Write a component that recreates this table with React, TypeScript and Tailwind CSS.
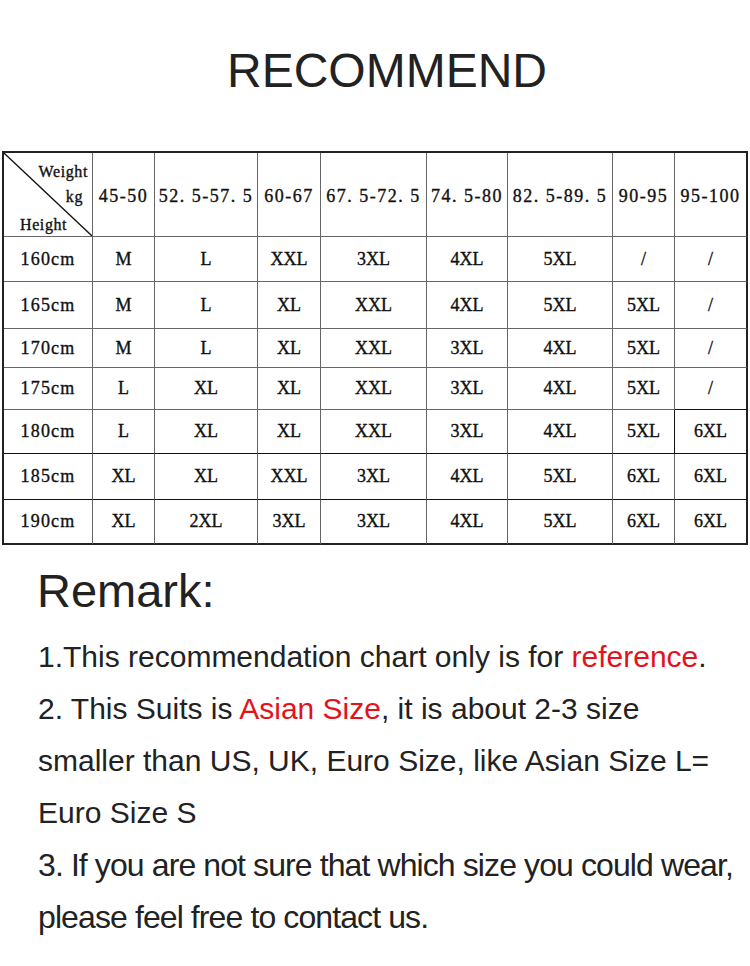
import React from "react";

const headers = ["45-50", "52. 5-57. 5", "60-67", "67. 5-72. 5", "74. 5-80", "82. 5-89. 5", "90-95", "95-100"];

const rows: string[][] = [
  ["160cm", "M", "L", "XXL", "3XL", "4XL", "5XL", "/", "/"],
  ["165cm", "M", "L", "XL", "XXL", "4XL", "5XL", "5XL", "/"],
  ["170cm", "M", "L", "XL", "XXL", "3XL", "4XL", "5XL", "/"],
  ["175cm", "L", "XL", "XL", "XXL", "3XL", "4XL", "5XL", "/"],
  ["180cm", "L", "XL", "XL", "XXL", "3XL", "4XL", "5XL", "6XL"],
  ["185cm", "XL", "XL", "XXL", "3XL", "4XL", "5XL", "6XL", "6XL"],
  ["190cm", "XL", "2XL", "3XL", "3XL", "4XL", "5XL", "6XL", "6XL"],
];

function cellClass(r: number, c: number): string {
  const base = c === 0 ? "flex items-center justify-center whitespace-nowrap tracking-[1.2px]" : "flex items-center justify-center whitespace-nowrap";
  const right = c === 8 ? "border-r-2 border-r-[#222]" : c === 7 && r === 4 ? "border-r border-r-[#111]" : "border-r border-r-[#666]";
  const bottom =
    r === 6
      ? "border-b-2 border-b-[#222]"
      : r === 4 || r === 5
      ? "border-b border-b-[#111]"
      : r === 3 && c === 8
      ? "border-b border-b-[#111]"
      : "border-b border-b-[#666]";
  return `${base} ${right} ${bottom}`;
}

export default function App() {
  return (
    <div className="w-[750px] h-[966px] bg-white text-[#222] overflow-hidden" style={{ fontFamily: "'Liberation Sans', Arial, sans-serif" }}>
      <h1 className="pt-[47px] text-center text-[48px] leading-[48px] font-normal pl-[24px]">RECOMMEND</h1>

      <div className="mt-[56px] ml-[2px] w-[746px]">
        <div
          className="grid grid-cols-[89px_62px_103px_63px_106px_81px_105px_62px_73px] grid-rows-[84px_45px_47px_39px_42px_44px_46px_45px] border-l-2 border-t-2 border-[#222] text-[#111] text-[18px] [-webkit-text-stroke:0.35px_#111]"
          style={{ fontFamily: "'Liberation Serif', 'Times New Roman', serif" }}
        >
          <div className="relative border-r border-b border-[#666] text-[16px] tracking-[0.6px]">
            <svg className="absolute inset-0 w-full h-full" viewBox="0 0 88 83" preserveAspectRatio="none">
              <line x1="0" y1="0" x2="88" y2="83" stroke="#111" strokeWidth="1.3" />
            </svg>
            <div className="flex flex-col pt-[10px]">
              <div className="h-[18px] leading-[18px] text-right pr-[4px]">Weight</div>
              <div className="h-[18px] leading-[18px] mt-[7px] text-right pr-[9px]">kg</div>
              <div className="h-[18px] leading-[18px] mt-[10px] text-left pl-[16px]">Height</div>
            </div>
          </div>
          {headers.map((h, i) => (
            <div
              key={h}
              className={
                i === 7
                  ? "flex items-center justify-center pt-[4px] whitespace-nowrap tracking-[1.5px] border-r-2 border-b border-r-[#222] border-b-[#666]"
                  : "flex items-center justify-center pt-[4px] whitespace-nowrap tracking-[1.5px] border-r border-b border-[#666]"
              }
            >
              {h}
            </div>
          ))}
          {rows.map((row, r) =>
            row.map((v, c) => (
              <div key={`${r}-${c}`} className={cellClass(r, c)}>
                {v}
              </div>
            ))
          )}
        </div>
      </div>

      <div className="pl-[37px] mt-[22px]">
        <div className="text-[47px] leading-[47px]">Remark:</div>
        <div className="mt-[17px] pl-[1px] text-[30px] leading-[52px] whitespace-nowrap">
          <div>
            1.This recommendation chart only is for <span className="text-[#e3131b]">reference</span>.
          </div>
          <div>
            2. This Suits is <span className="text-[#e3131b]">Asian Size</span>, it is about 2-3 size
            <br />
            smaller than US, UK, Euro Size, like Asian Size L=
            <br />
            Euro Size S
          </div>
          <div className="text-[32px] tracking-[-0.9px]">
            3. If you are not sure that which size you could wear,
            <br />
            please feel free to contact us.
          </div>
        </div>
      </div>
    </div>
  );
}
